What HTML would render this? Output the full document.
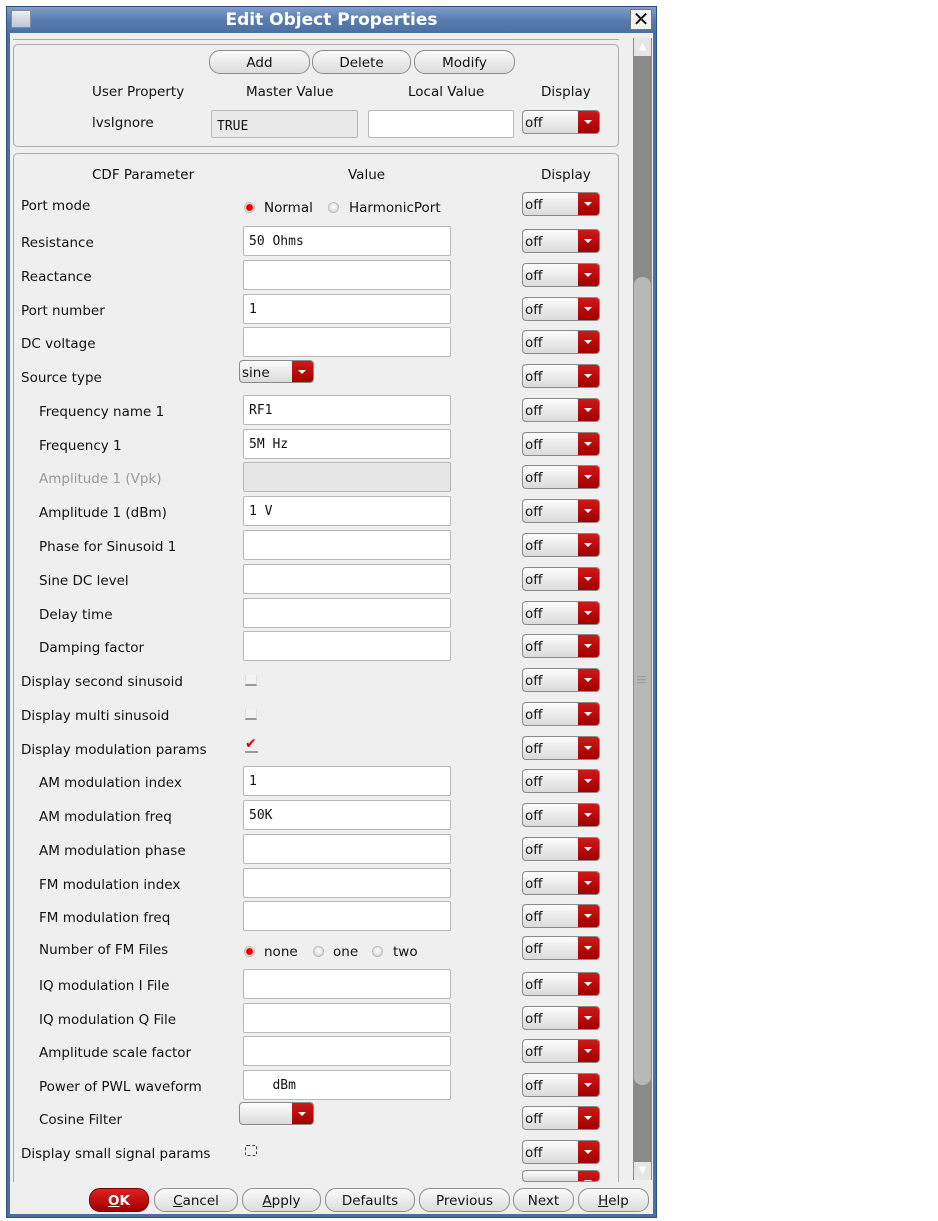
<!DOCTYPE html>
<html><head><meta charset="utf-8">
<style>
*{box-sizing:border-box;margin:0;padding:0}
body{width:938px;height:1221px;background:#fff;position:relative;overflow:hidden;font-family:"DejaVu Sans","Liberation Sans",sans-serif;font-size:13.5px;color:#111}
.a{position:absolute}
#win{left:6px;top:6px;width:651px;height:1212px;background:#4a6fa5;border:1px solid #2f4f7f}
#title{left:7px;top:7px;width:649px;height:26px;background:linear-gradient(#7f9fca,#5a7db0 50%,#4c6fa3);color:#fff;font-weight:bold;font-size:17px;text-align:center;line-height:26px}
#body{left:10px;top:33px;width:643px;height:1181px;background:#efefef}
.grp{border:1px solid #a9a9a9;border-radius:5px}
.btn{height:24px;border:1px solid #8d8d8d;border-radius:11px;background:linear-gradient(#fbfbfb,#dcdcdc);text-align:center;line-height:24px;font-size:13.5px}
.inp{width:208px;height:30px;border:1px solid #b8b8b8;border-radius:2px;background:#fff;font-family:"DejaVu Sans Mono","Liberation Mono",monospace;font-size:13px;line-height:30px;padding-left:5px}
.dd{width:78px;height:24px;border:1px solid #8a8a8a;border-radius:4px;background:linear-gradient(#fdfdfd,#dadada);font-size:13.5px;line-height:25px;padding-left:2px;overflow:hidden}
.dd::after{content:"";position:absolute;right:0;top:0;width:21px;height:22px;background:linear-gradient(#d01818,#a00000)}
.dd::before{content:"";position:absolute;right:7px;top:9px;border-left:4px solid transparent;border-right:4px solid transparent;border-top:4px solid #fff;z-index:2}
.lbl{font-size:13.5px;line-height:16px}
.rad{width:11px;height:11px;border-radius:50%;background:radial-gradient(circle at 50% 40%,#fff,#ccc);border:1px solid #bbb}
.rad.on{background:radial-gradient(circle,#e00 0 3px,#f4f4f4 4px)}
.cb{width:12px;height:11px;border-bottom:2px solid #999;background:#f3f3f3;border-left:1px solid #ddd;border-right:1px solid #ddd}
</style></head><body>
<div class="a" id="win"></div>
<div class="a" id="title">Edit Object Properties</div>
<div class="a" style="left:11px;top:10px;width:20px;height:18px;background:linear-gradient(#eee,#b9c6d8);border:1px solid #889"></div>
<div class="a" style="left:630px;top:9px;width:22px;height:21px;background:#f2f2f2;border:1px solid #777;font-size:20px;line-height:19px;text-align:center;font-family:'DejaVu Sans',sans-serif">✕</div>
<div class="a" id="body"></div>
<div class="a" style="left:13px;top:34px;width:606px;height:6px;border-bottom:1px solid #aaa"></div>
<div class="a" style="left:633px;top:38px;width:19px;height:1142px;background:#8a8a8a"></div>
<div class="a" style="left:634px;top:38px;width:17px;height:18px;background:#e6e6e6;color:#fff;font-size:10px;text-align:center;line-height:18px">▲</div>
<div class="a" style="left:634px;top:1162px;width:17px;height:18px;background:#e6e6e6;color:#fff;font-size:10px;text-align:center;line-height:18px">▼</div>
<div class="a" style="left:634px;top:277px;width:17px;height:808px;background:#b7b7b7;border-radius:8px"></div>
<div class="a" style="left:637px;top:676px;width:10px;font-size:9px;color:#888;line-height:3px">―<br>―<br>―</div>
<div class="a grp" style="left:13px;top:44px;width:606px;height:103px"></div>
<div class="a btn" style="left:209px;top:50px;width:101px">Add</div>
<div class="a btn" style="left:312px;top:50px;width:99px">Delete</div>
<div class="a btn" style="left:414px;top:50px;width:101px">Modify</div>
<div class="a lbl" style="left:92px;top:84px">User Property</div>
<div class="a lbl" style="left:246px;top:84px">Master Value</div>
<div class="a lbl" style="left:408px;top:84px">Local Value</div>
<div class="a lbl" style="left:541px;top:84px">Display</div>
<div class="a lbl" style="left:92px;top:115px">lvsIgnore</div>
<div class="a inp" style="left:211px;top:110px;width:147px;height:28px;background:#e9e9e9;line-height:32px">TRUE</div>
<div class="a inp" style="left:368px;top:110px;width:146px;height:28px"></div>
<div class="a dd" style="left:522px;top:110px">off</div>
<div class="a grp" style="left:13px;top:153px;width:606px;height:1040px;border-bottom:none"></div>
<div class="a lbl" style="left:92px;top:167px">CDF Parameter</div>
<div class="a lbl" style="left:348px;top:167px">Value</div>
<div class="a lbl" style="left:541px;top:167px">Display</div>
<div id="rows"></div>
<div class="a" style="left:11px;top:1182px;width:621px;height:32px;background:#efefef"></div>
<div class="a btn" style="left:89px;top:1188px;width:60px;background:linear-gradient(#e02020,#a00000);color:#fff;font-weight:bold;border-color:#700"><u>O</u>K</div>
<div class="a btn" style="left:154px;top:1188px;width:84px"><u>C</u>ancel</div>
<div class="a btn" style="left:242px;top:1188px;width:79px"><u>A</u>pply</div>
<div class="a btn" style="left:325px;top:1188px;width:90px">Defaults</div>
<div class="a btn" style="left:419px;top:1188px;width:91px">Previous</div>
<div class="a btn" style="left:513px;top:1188px;width:61px">Next</div>
<div class="a btn" style="left:578px;top:1188px;width:71px"><u>H</u>elp</div>
<script>
var R=[
["Port mode",0,"radio",["Normal","HarmonicPort"],204],
["Resistance",0,"inp","50 Ohms",241],
["Reactance",0,"inp","",275],
["Port number",0,"inp","1",309],
["DC voltage",0,"inp","",342],
["Source type",0,"sel","sine",376],
["Frequency name 1",1,"inp","RF1",410],
["Frequency 1",1,"inp","5M Hz",444],
["Amplitude 1 (Vpk)",1,"dis","",477],
["Amplitude 1 (dBm)",1,"inp","1 V",511],
["Phase for Sinusoid 1",1,"inp","",545],
["Sine DC level",1,"inp","",579],
["Delay time",1,"inp","",613],
["Damping factor",1,"inp","",646],
["Display second sinusoid",0,"cb",0,680],
["Display multi sinusoid",0,"cb",0,714],
["Display modulation params",0,"cb",1,748],
["AM modulation index",1,"inp","1",781],
["AM modulation freq",1,"inp","50K",815],
["AM modulation phase",1,"inp","",849],
["FM modulation index",1,"inp","",883],
["FM modulation freq",1,"inp","",916],
["Number of FM Files",1,"radio",["none","one","two"],948],
["IQ modulation I File",1,"inp","",984],
["IQ modulation Q File",1,"inp","",1018],
["Amplitude scale factor",1,"inp","",1051],
["Power of PWL waveform",1,"inp","   dBm",1085],
["Cosine Filter",1,"sel","",1118],
["Display small signal params",0,"cb2",0,1152]];
var h="";
R.forEach(function(r){var y=r[4];
h+='<div class="a lbl" style="left:'+(r[1]?39:21)+'px;top:'+(y-6)+'px;'+(r[2]=="dis"?"color:#999":"")+'">'+r[0]+'</div>';
if(r[2]=="inp")h+='<div class="a inp" style="left:243px;top:'+(y-15)+'px">'+r[3].replace(/ /g,"&nbsp;")+'</div>';
if(r[2]=="dis")h+='<div class="a inp" style="left:243px;top:'+(y-15)+'px;background:#e6e6e6"></div>';
if(r[2]=="sel")h+='<div class="a dd" style="left:239px;top:'+(y-16)+'px;width:75px;height:23px">'+r[3]+'</div>';
if(r[2]=="cb")h+=r[3]?'<div class="a" style="left:245px;top:'+(y-11)+'px;color:#d00;font-size:14px;font-weight:bold;border-bottom:2px solid #999;line-height:14px;width:13px">✔</div>':'<div class="a cb" style="left:245px;top:'+(y-5)+'px"></div>';
if(r[2]=="cb2")h+='<div class="a" style="left:245px;top:'+(y-7)+'px;width:12px;height:11px;border:1px dashed #444;border-radius:2px"></div>';
if(r[2]=="radio"){var pos=r[3].length==2?[244,264,328,349]:[244,264,313,333,372,393];
r[3].forEach(function(t,i){h+='<div class="a rad'+(i==0?' on':'')+'" style="left:'+pos[i*2]+'px;top:'+(y-2)+'px"></div><div class="a lbl" style="left:'+pos[i*2+1]+'px;top:'+(y-4)+'px">'+t+'</div>';});}
h+='<div class="a dd" style="left:522px;top:'+(y-12)+'px">off</div>';
});
h+='<div class="a dd" style="left:522px;top:1170px;height:12px;overflow:hidden"></div>';
document.getElementById("rows").innerHTML=h;
</script>
</body></html>
